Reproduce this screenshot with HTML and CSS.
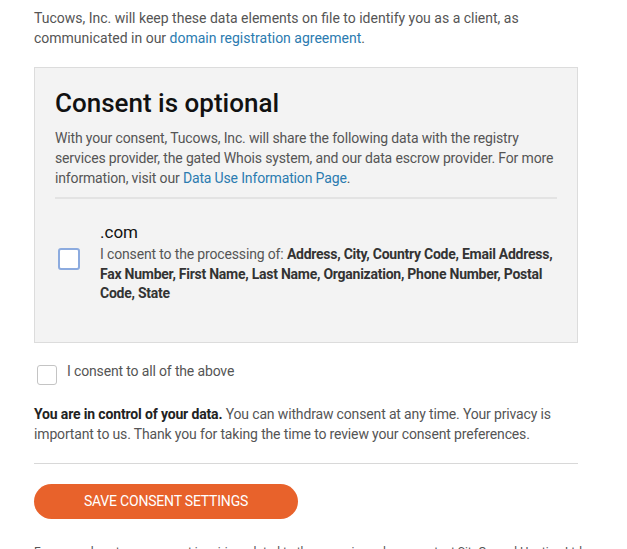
FILE: index.html
```html
<!DOCTYPE html>
<html>
<head>
<meta charset="utf-8">
<link rel="stylesheet" href="styles.css">
</head>
<body>
<div class="page">
  <p class="intro">Tucows, Inc. will keep these data elements on file to identify you as a client, as communicated in our <a href="#">domain registration agreement</a>.</p>

  <section class="box">
    <h2>Consent is optional</h2>
    <p class="desc">With your consent, Tucows, Inc. will share the following data with the registry services provider, the gated Whois system, and our data escrow provider. For more information, visit our <a href="#">Data Use Information Page</a>.</p>
    <hr class="inner-rule">
    <div class="tld">
      <span class="check blue"></span>
      <div class="tld-body">
        <div class="tld-name">.com</div>
        <p class="tld-text">I consent to the processing of: <b>Address, City, Country Code, Email Address, Fax Number, First Name, Last Name, Organization, Phone Number, Postal Code, State</b></p>
      </div>
    </div>
  </section>

  <label class="all">
    <span class="check gray"></span>
    <span>I consent to all of the above</span>
  </label>

  <p class="control"><b>You are in control of your data.</b> You can withdraw consent at any time. Your privacy is important to us. Thank you for taking the time to review your consent preferences.</p>

  <hr class="rule">

  <button class="save">SAVE CONSENT SETTINGS</button>

  <p class="footer">For general customer support inquiries related to these services please contact SiteGround Hosting Ltd.</p>
</div>
</body>
</html>
```

FILE: styles.css
```css
* { box-sizing: border-box; }
html, body { margin: 0; padding: 0; background: #fff; }
body {
  font-family: Roboto, "Liberation Sans", Arial, sans-serif;
  font-size: 14px;
  line-height: 20px;
  color: #555;
}
a { color: #2b7bb0; text-decoration: none; }
.page {
  width: 544px;
  margin-left: 34px;
  padding-top: 8px;
}
.intro { margin: 0 0 19px; }
.box {
  background: #f3f3f3;
  border: 1px solid #dcdcdc;
  padding: 19px 20px 38px;
  letter-spacing: -0.15px;
}
.box h2 {
  margin: 0 0 9px;
  font-size: 26px;
  line-height: 32px;
  font-weight: 500;
  color: #111;
  letter-spacing: 0;
}
.desc { margin: 0; }
.inner-rule {
  border: 0;
  height: 2px;
  background: #e3e3e3;
  margin: 9px 0 22px;
}
.tld { display: flex; align-items: flex-start; }
.check {
  flex: none;
  display: inline-block;
  background: #fff;
  border-radius: 3px;
}
.check.blue {
  width: 22px; height: 22px;
  border: 2px solid #8cabdf;
  margin: 27px 20px 0 3px;
}
.tld-body { flex: 1; }
.tld-name {
  font-size: 17px;
  line-height: 22px;
  color: #111;
  margin-bottom: 2px;
  letter-spacing: 0;
}
.tld-text { margin: 0; line-height: 19.5px; }
.tld-text b { color: #333; font-weight: 700; letter-spacing: -0.25px; }
.all {
  display: flex;
  align-items: flex-start;
  margin-top: 18px;
  letter-spacing: -0.15px;
}
.check.gray {
  width: 20px; height: 20px;
  border: 1px solid #c4c4c4;
  margin: 4px 10px 0 3px;
}
.control { margin: 19px 0 0; letter-spacing: -0.15px; }
.control b { color: #222; }
.rule {
  border: 0;
  height: 1px;
  background: #d8d8d8;
  margin: 19px 0 20px;
}
.save {
  display: block;
  width: 264px;
  height: 35px;
  border: 0;
  border-radius: 18px;
  background: #e8622b;
  color: #fff;
  font-family: Roboto, "Liberation Sans", Arial, sans-serif;
  font-size: 14px;
  letter-spacing: -0.2px;
  padding: 0;
}
.footer { margin: 23px 0 0; font-size: 12px; white-space: nowrap; }
```
